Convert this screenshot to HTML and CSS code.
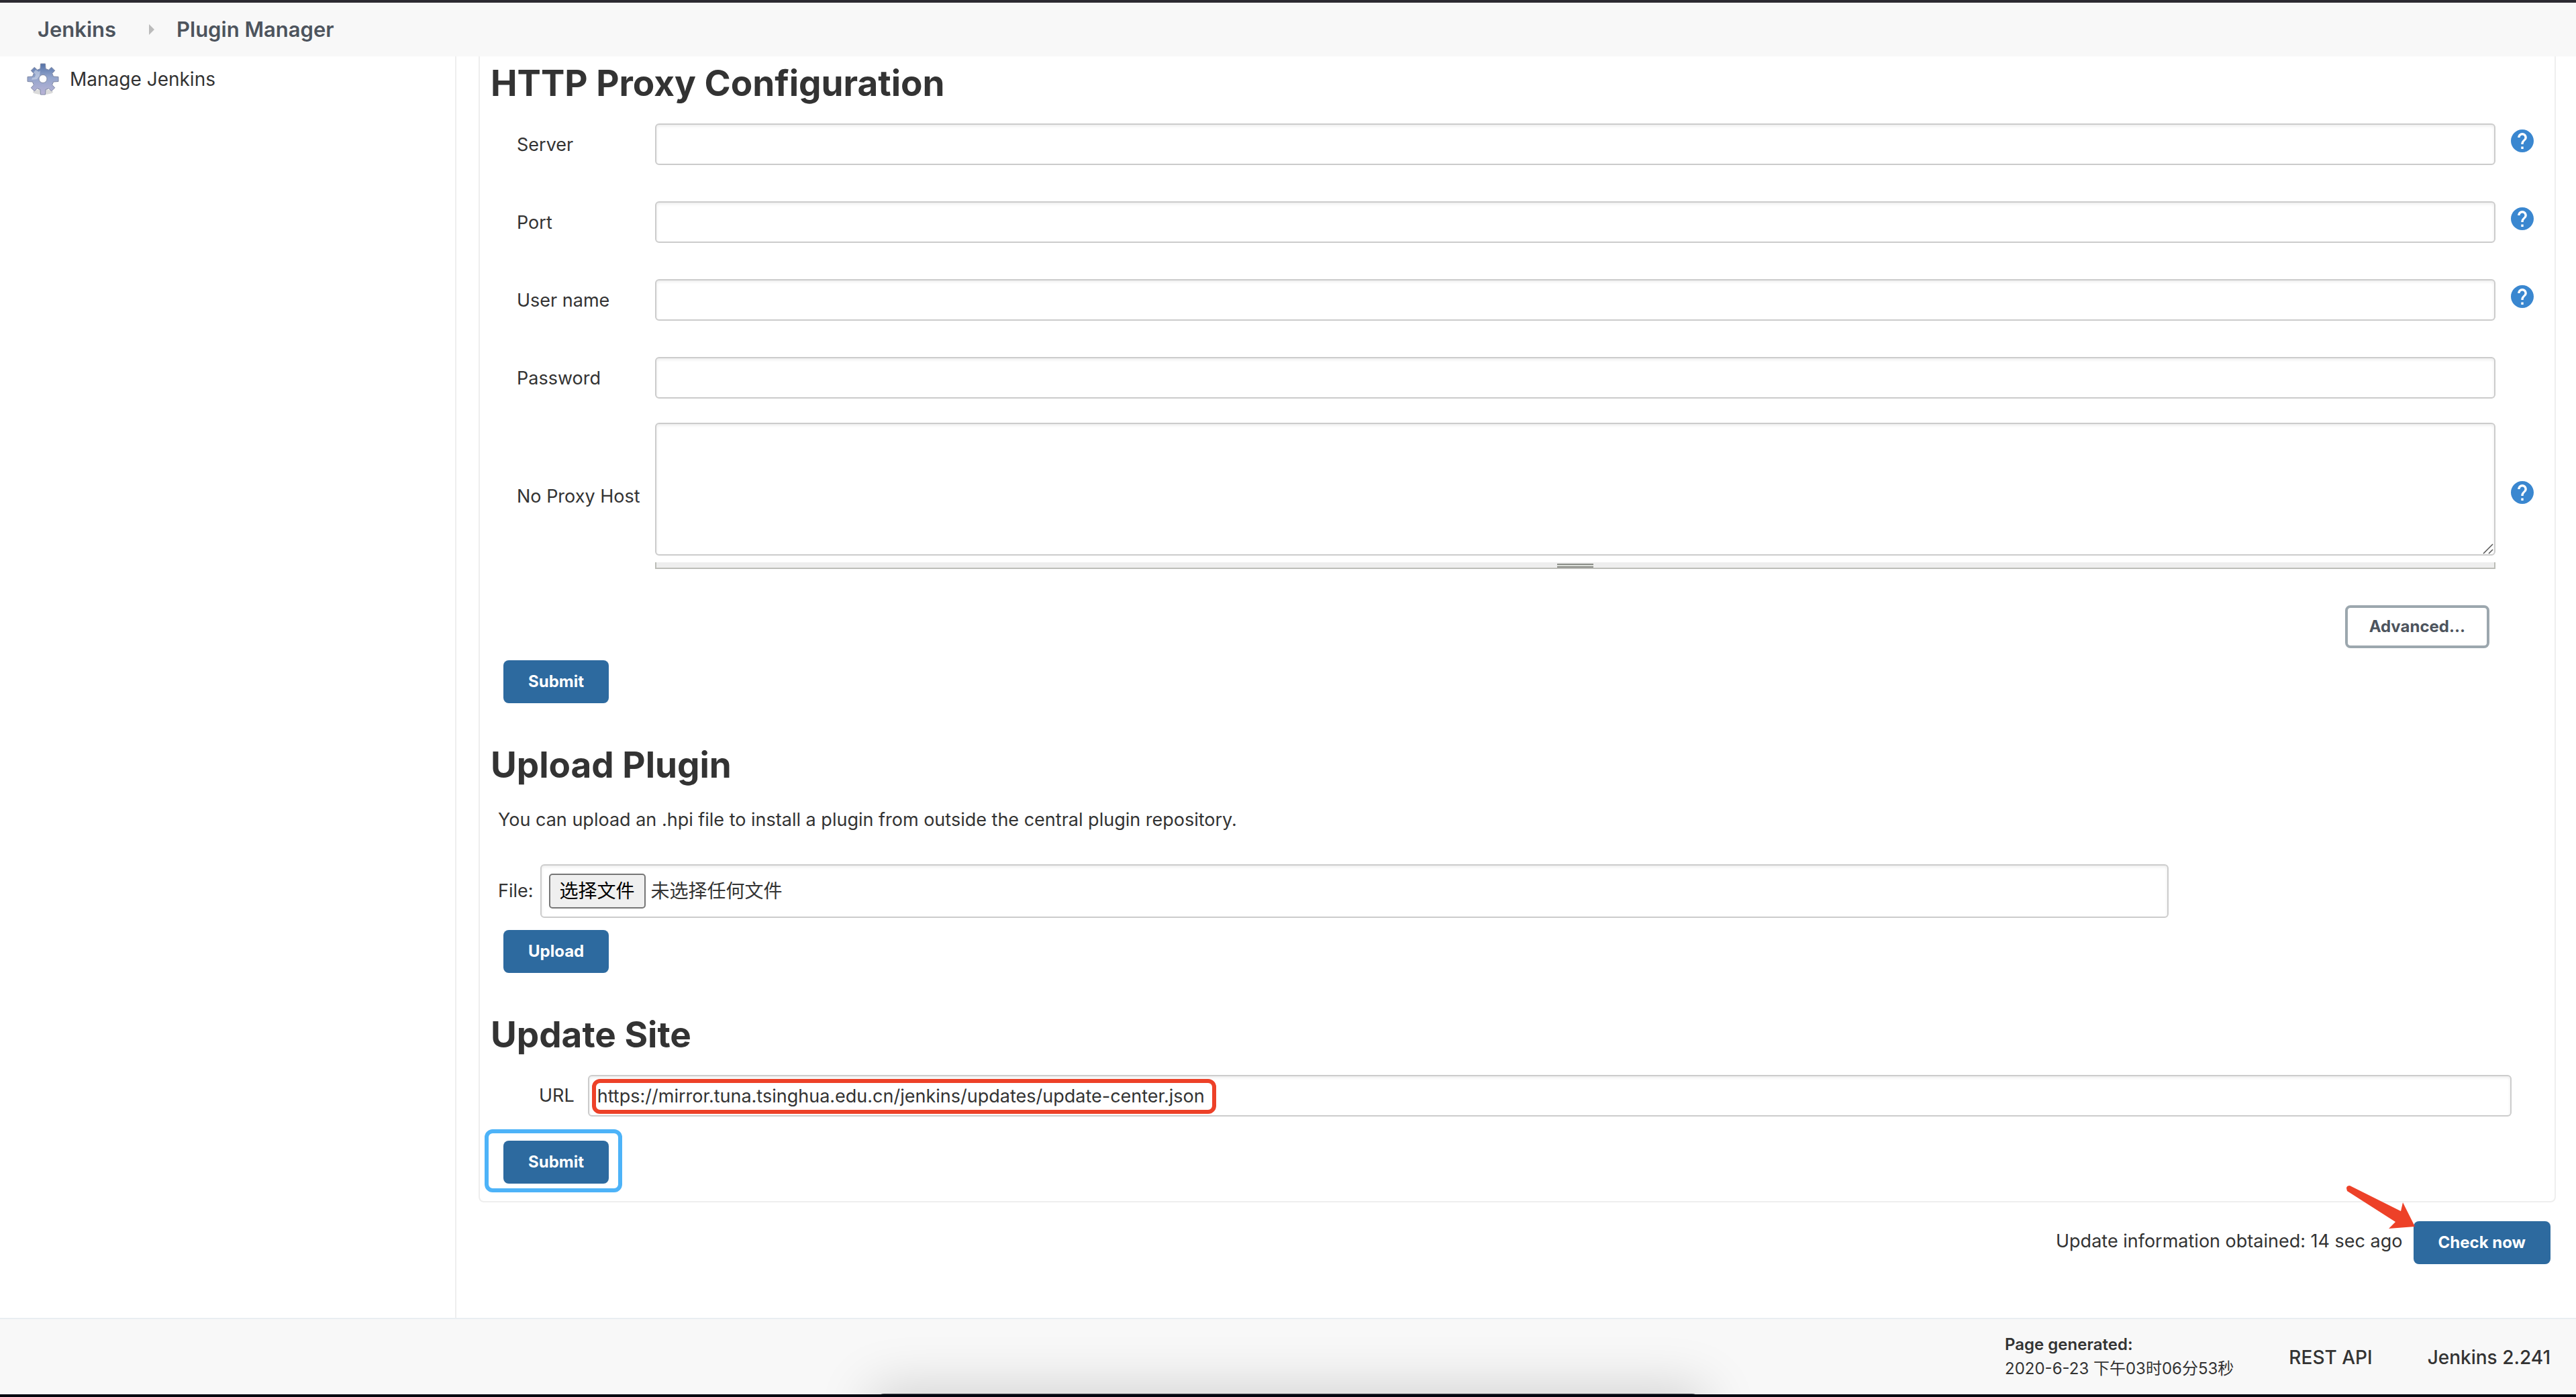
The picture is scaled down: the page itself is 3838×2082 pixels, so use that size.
FILE: index.html
```html
<!DOCTYPE html>
<html lang="en">
<head>
<meta charset="utf-8">
<title>Plugin Manager [Jenkins]</title>
<link rel="stylesheet" href="styles.css">
</head>
<body>
<svg class="sprite" aria-hidden="true">
  <symbol id="icon-help" viewBox="2 2 20 20">
    <path fill="#3a87d0" d="M12 2C6.48 2 2 6.48 2 12s4.48 10 10 10 10-4.48 10-10S17.52 2 12 2zm1 17h-2v-2h2v2zm2.070-7.750l-.9.920C13.450 12.900 13 13.500 13 15h-2v-.5c0-1.100.450-2.100 1.170-2.830l1.240-1.260c.370-.360.590-.860.590-1.410 0-1.100-.9-2-2-2s-2 .9-2 2H8c0-2.210 1.790-4 4-4s4 1.790 4 4c0 .880-.360 1.680-.930 2.250z"/>
  </symbol>
</svg>

<header class="breadcrumbs">
  <nav class="crumbs" aria-label="Breadcrumb">
    <a href="#">Jenkins</a>
    <span class="crumb-arrow"></span>
    <a href="#">Plugin Manager</a>
  </nav>
</header>

<div class="layout">
  <aside class="side">
    <a class="task" href="#">
      <svg class="gear" viewBox="0 0 48 48" aria-hidden="true">
        <defs>
          <linearGradient id="gear-fill" x1="0" y1="0" x2="0" y2="1">
            <stop offset="0" stop-color="#5472a8"/>
            <stop offset=".45" stop-color="#93a5cc"/>
            <stop offset="1" stop-color="#b9b3d6"/>
          </linearGradient>
        </defs>
        <ellipse cx="24" cy="43" rx="15" ry="4" fill="#000" opacity=".14"/>
        <path fill="url(#gear-fill)" stroke="#8089a5" stroke-linejoin="round" fill-rule="evenodd" d="M20.500 1h7l.5 7.500 4.500 1.700 4.200-4 5 5-4 4.300 1.800 4.500 7.500.5v7l-7.500.5-1.800 4.500 4 4.300-5 5-4.200-4-4.500 1.700-.5 7.500h-7l-.5-7.500-4.500-1.700-4.200 4-5-5 4-4.300-1.800-4.500-7.500-.5v-7l7.500-.5 1.800-4.500-4-4.300 5-5 4.200 4 4.500-1.700zM24 17.500a6 6 0 1 0 0 12 6 6 0 1 0 0-12z"/>
        <path fill="#d3dcec" opacity=".55" d="M10 14l3-4 5 3 2-2-1 8-4 5-8 1 1-3 4-1 1-4z"/>
      </svg>
      <span>Manage Jenkins</span>
    </a>
  </aside>

  <main class="main">
    <div class="panel">
      <form class="section">
        <h1>HTTP Proxy Configuration</h1>
        <div class="fields">
          <div class="field">
            <label for="server">Server</label>
            <input class="box" id="server" type="text">
            <a class="help" href="#" aria-label="Help for Server"><svg><use href="#icon-help"/></svg></a>
          </div>
          <div class="field">
            <label for="port">Port</label>
            <input class="box" id="port" type="text">
            <a class="help" href="#" aria-label="Help for Port"><svg><use href="#icon-help"/></svg></a>
          </div>
          <div class="field">
            <label for="user">User name</label>
            <input class="box" id="user" type="text">
            <a class="help" href="#" aria-label="Help for User name"><svg><use href="#icon-help"/></svg></a>
          </div>
          <div class="field field-short">
            <label for="password">Password</label>
            <input class="box" id="password" type="password">
          </div>
          <div class="field">
            <label for="noproxy">No Proxy Host</label>
            <div class="area">
              <textarea class="box" id="noproxy"></textarea>
              <svg class="grip" viewBox="0 0 16 16" aria-hidden="true"><path d="M1 15 15 1M9 15l6-6" fill="none" stroke="#555" stroke-width="1.500"/></svg>
              <div class="area-handle"><span></span></div>
            </div>
            <a class="help" href="#" aria-label="Help for No Proxy Host"><svg><use href="#icon-help"/></svg></a>
          </div>
          <div class="advanced"><button class="btn btn-outline" type="button">Advanced...</button></div>
        </div>
        <div class="actions"><button class="btn" type="button">Submit</button></div>
      </form>

      <form class="section">
        <h1>Upload Plugin</h1>
        <p class="note">You can upload an .hpi file to install a plugin from outside the central plugin repository.</p>
        <div class="file-row">
          <label for="plugin-file">File:</label>
          <div class="box file-box">
            <input class="file-input" id="plugin-file" type="file">
            <label class="file-button" for="plugin-file">选择文件</label>
            <span>未选择任何文件</span>
          </div>
        </div>
        <div class="actions"><button class="btn" type="button">Upload</button></div>
      </form>

      <form class="section">
        <h1>Update Site</h1>
        <div class="url-row">
          <label for="url">URL</label>
          <div class="url-wrap">
            <input class="box" id="url" type="text" value="https://mirror.tuna.tsinghua.edu.cn/jenkins/updates/update-center.json">
            <span class="mark mark-red"></span>
          </div>
        </div>
        <div class="actions actions-site">
          <div class="marked"><button class="btn" type="button">Submit</button><span class="mark mark-blue"></span></div>
        </div>
      </form>
    </div>

    <div class="check">
      <span>Update information obtained: 14 sec ago</span>
      <div class="marked">
        <button class="btn" type="button">Check now</button>
        <svg class="pointer" viewBox="0 0 104 64" aria-hidden="true"><path fill="#ed4128" d="M0 4Q0 0 5 0L81 38 84 25 102 61 63 64 73 54 1 8Z"/></svg>
      </div>
    </div>
  </main>
</div>

<footer class="footer">
  <div class="generated"><b>Page generated:</b><span>2020-6-23 下午03时06分53秒</span></div>
  <a href="#">REST API</a>
  <a href="#">Jenkins 2.241</a>
  <div class="dock"></div>
</footer>
</body>
</html>
```
FILE: styles.css
```css
* { box-sizing: border-box; }

body {
  margin: 0;
  min-height: 100vh;
  display: flex;
  flex-direction: column;
  background: #fff;
  color: #333;
  font: 27px/44px Inter, "Noto Sans CJK SC", sans-serif;
  overflow-x: hidden;
}

a { color: inherit; text-decoration: none; }
input, textarea, button { font: inherit; color: inherit; margin: 0; }
.sprite { display: none; }

/* breadcrumb bar */
.breadcrumbs {
  border-top: 4px solid #2c2a31;
  background: #f8f8f8;
  padding: 18px 56px;
}
.crumbs {
  display: flex;
  align-items: center;
  color: #4d545d;
  font-size: 31px;
  font-weight: 600;
}
.crumb-arrow {
  margin: 0 33px 0 49px;
  border-left: 8px solid #bbb;
  border-top: 8px solid transparent;
  border-bottom: 8px solid transparent;
}

/* columns */
.layout { flex: 1; display: flex; }
.side {
  flex: none;
  width: 680px;
  border-right: 2px solid #eee;
  padding: 10px 40px;
  font-size: 28px;
}
.task { display: flex; align-items: center; gap: 16px; height: 48px; }
.gear { width: 48px; height: 48px; }
.main { flex: 1; min-width: 0; padding: 0 30px 80px 33px; }

.panel {
  border: 2px solid #eee;
  border-top: 0;
  border-radius: 0 0 8px 8px;
  padding: 8px 31px 26px 16px;
}
.section + .section { margin-top: 60px; }
h1 {
  margin: 0 0 28px;
  font-size: 53px;
  line-height: 64px;
  font-weight: 700;
}

/* form controls */
.box {
  display: block;
  width: 100%;
  height: 62px;
  border: 2px solid #ccc;
  border-radius: 6px;
  background: #fff;
  padding: 0 12px;
  box-shadow: inset 0 2px 4px rgba(0, 0, 0, .08);
  outline: 0;
}
.fields { padding-left: 39px; }
.field {
  display: grid;
  grid-template-columns: 206px 1fr 57px;
  align-items: center;
  margin-bottom: 54px;
}
.field label { padding-top: 2px; }
.field-short { margin-bottom: 36px; }
.help { justify-self: end; margin-bottom: 10px; height: 34px; }
.help svg { display: block; width: 34px; height: 34px; }

.area { position: relative; }
textarea.box { height: 198px; resize: none; }
.grip { position: absolute; right: 3px; top: 180px; width: 16px; height: 16px; }
.area-handle {
  margin-top: 10px;
  height: 10px;
  border: solid #bcbdb8;
  border-width: 0 2px 2px;
  background: #eee;
  display: flex;
  justify-content: center;
}
.area-handle span {
  width: 54px;
  height: 6px;
  margin-top: 2px;
  border: solid #8b8d88;
  border-width: 2px 0;
  background: #dde0db;
}

.btn {
  height: 64px;
  border: 0;
  border-radius: 8px;
  padding: 0 37px;
  background: #2d6a9f;
  color: #fff;
  font-size: 24px;
  font-weight: 700;
  white-space: nowrap;
}
.btn-outline {
  border: 4px solid #9ca7ae;
  padding: 0 32px;
  background: #fff;
  color: #4d545d;
}
.advanced { display: flex; justify-content: flex-end; padding-right: 66px; }
.actions { margin-top: 18px; padding-left: 19px; display: flex; }
.actions-site { margin-top: 36px; }

.note { margin: 0 0 44px 11px; }
.file-row { display: flex; align-items: center; gap: 10px; margin-left: 11px; }
.file-box {
  position: relative;
  display: flex;
  align-items: center;
  gap: 8px;
  flex: none;
  width: 80%;
  height: 80px;
  padding: 0 11px;
  font-size: 28px;
}
.file-input { position: absolute; width: 1px; height: 1px; opacity: 0; }
.file-button {
  border: 2px solid #767676;
  border-radius: 5px;
  background: #efefef;
  color: #000;
  height: 52px;
  line-height: 48px;
  padding: 0 14px;
}

.url-row { display: flex; align-items: center; gap: 20px; padding: 0 33px 0 72px; }
.url-wrap { position: relative; flex: 1; }

/* hand-drawn annotations */
.mark { position: absolute; border: 6px solid; border-radius: 12px; pointer-events: none; }
.mark-red { left: 6px; top: 6px; width: 930px; height: 52px; border-color: #ed4128; }
.mark-blue { left: -28px; right: -20px; top: -17px; bottom: -13px; border-color: #4db3f8; }
.marked { position: relative; }
.pointer { position: absolute; left: -100px; top: -53px; width: 104px; height: 64px; }

.check {
  display: flex;
  justify-content: flex-end;
  align-items: flex-start;
  gap: 16px;
  margin-top: 28px;
  padding-right: 8px;
}
.check > span { padding-top: 8px; }

/* page footer */
.footer {
  position: relative;
  overflow: hidden;
  display: flex;
  justify-content: flex-end;
  align-items: center;
  gap: 82px;
  height: 118px;
  padding-right: 38px;
  border-top: 2px solid #e9eef2;
  border-bottom: 4px solid #03060f;
  background: #f8f8f8;
  font-size: 28px;
  font-weight: 500;
}
.footer a { padding-top: 2px; }
.generated {
  display: flex;
  flex-direction: column;
  font-size: 24px;
  line-height: 36px;
  font-weight: 400;
}
.generated b { font-weight: 600; }
.dock {
  position: absolute;
  left: 34%;
  right: 34%;
  bottom: -60px;
  height: 61px;
  border-radius: 12px 12px 0 0;
  background: #4a4b50;
  box-shadow: 0 0 80px 8px rgba(0, 0, 0, .17);
}
```
